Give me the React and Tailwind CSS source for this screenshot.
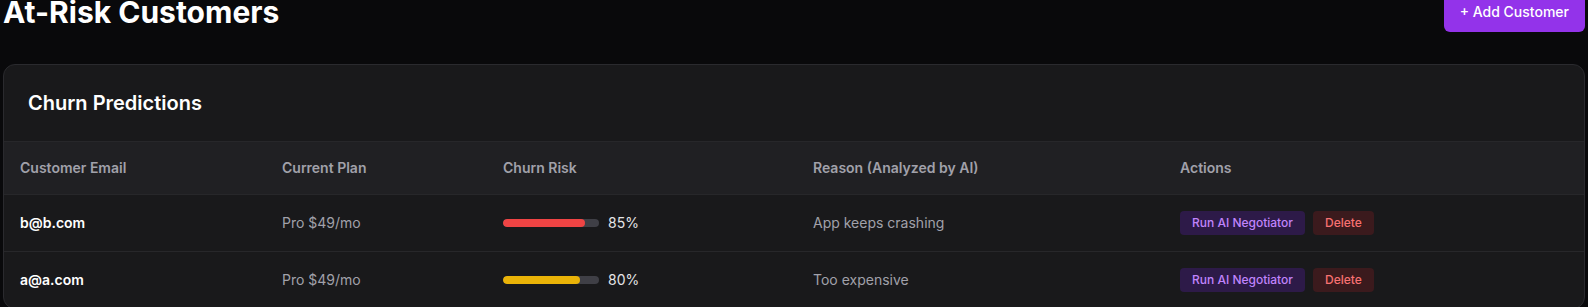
const customers = [
  {
    email: "b@b.com",
    plan: "Pro $49/mo",
    risk: 85,
    reason: "App keeps crashing",
  },
  {
    email: "a@a.com",
    plan: "Pro $49/mo",
    risk: 80,
    reason: "Too expensive",
  },
];

function RiskBar({ value }) {
  // Red for high risk, yellow otherwise
  const color = value >= 85 ? "bg-[#ef4444]" : "bg-[#eab308]";
  return (
    <div className="flex items-center gap-[9px]">
      <div className="h-2 w-24 overflow-hidden rounded-full bg-[#3f3f46]">
        <div className={`h-full rounded-full ${color}`} style={{ width: `${value}%` }} />
      </div>
      <span className="text-sm text-[#e4e4e7]">{value}%</span>
    </div>
  );
}

export default function App() {
  return (
    <div
      className="min-h-screen overflow-hidden bg-[#09090b] px-[3px] text-white"
      style={{ fontFamily: "Inter, 'Noto Sans', sans-serif" }}>
      {/* Page header */}
      <div className="mt-[-8px] flex items-center justify-between">
        <h1 className="text-3xl font-bold">At-Risk Customers</h1>
        <button className="h-10 rounded-md bg-[#9333ea] px-4 text-sm font-medium text-white">
          + Add Customer
        </button>
      </div>

      {/* Churn table card */}
      <div className="mt-8 overflow-hidden rounded-xl border border-[#2a2a2e] bg-[#19191b]">
        <div className="p-6">
          <h2 className="text-xl font-semibold">Churn Predictions</h2>
        </div>
        <table className="w-full table-fixed border-collapse text-left text-sm">
          <thead>
            <tr className="border-t border-[#27272a] bg-[#202023] text-[#a1a1aa]">
              <th className="w-[262px] px-4 py-4 font-semibold">Customer Email</th>
              <th className="w-[221px] px-4 py-4 font-semibold">Current Plan</th>
              <th className="w-[310px] px-4 py-4 font-semibold">Churn Risk</th>
              <th className="w-[367px] px-4 py-4 font-semibold">Reason (Analyzed by AI)</th>
              <th className="px-4 py-4 font-semibold">Actions</th>
            </tr>
          </thead>
          <tbody>
            {customers.map(c => (
              <tr key={c.email} className="border-t border-[#27272a]">
                <td className="px-4 py-4 font-semibold text-white">{c.email}</td>
                <td className="px-4 py-4 text-[#a1a1aa]">{c.plan}</td>
                <td className="px-4 py-4">
                  <RiskBar value={c.risk} />
                </td>
                <td className="px-4 py-4 text-[#a1a1aa]">{c.reason}</td>
                <td className="px-4 py-4">
                  <div className="flex gap-2">
                    <button className="h-6 rounded bg-[#2d1a48] px-3 text-xs font-medium text-[#c084fc]">
                      Run AI Negotiator
                    </button>
                    <button className="h-6 rounded bg-[#3b1a1d] px-3 text-xs font-medium text-[#f87171]">
                      Delete
                    </button>
                  </div>
                </td>
              </tr>
            ))}
          </tbody>
        </table>
      </div>
    </div>
  );
}
